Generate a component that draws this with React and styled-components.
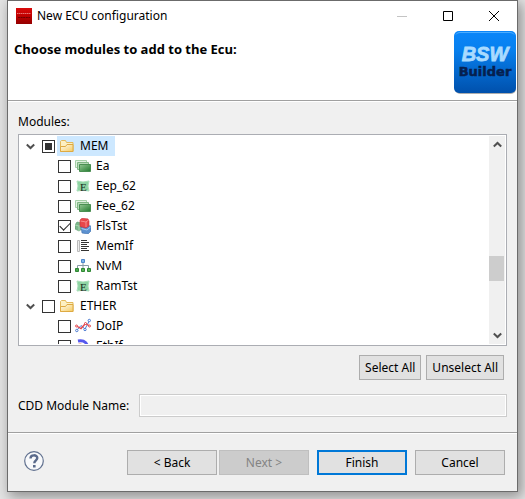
import React, { useEffect, useRef } from "react";
import styled, { createGlobalStyle, css } from "styled-components";

const GlobalStyle = createGlobalStyle`
  * { box-sizing: border-box; }
  body {
    margin: 0;
    background: #e4e4e4;
    color: #000;
    font: 12px/20px "Noto Sans", "Open Sans", sans-serif;
  }
  button, input { font: inherit; color: inherit; }
  svg { display: block; flex: none; }
`;

const Desktop = styled.div`
  height: 100vh;
  padding: 0 7px 7px;
  overflow: hidden;
`;

const Dialog = styled.main`
  display: flex;
  flex-direction: column;
  height: 100%;
  border: 1px solid #6b6b6b;
  background: #f0f0f0;
  box-shadow: 3px 4px 12px 1px rgba(0, 0, 0, 0.36);
`;

const TitleBar = styled.header`
  display: flex;
  align-items: center;
  gap: 5px;
  height: 29px;
  padding-left: 8px;
  background: #fff;
`;

const Title = styled.h1`
  flex: 1;
  margin: 0;
  padding-top: 1px;
  font-size: 12px;
  font-weight: 400;
`;

const CaptionButtons = styled.div`
  display: flex;
`;

const CaptionButton = styled.button`
  display: grid;
  place-items: center;
  width: 46px;
  height: 28px;
  padding: 0;
  border: 0;
  background: transparent;
`;

const Banner = styled.section`
  display: flex;
  justify-content: space-between;
  align-items: flex-start;
  height: 71px;
  padding: 1px 0 0 6px;
  border-bottom: 1px solid #a0a0a0;
  background: #fff;
`;

const BannerTitle = styled.h2`
  margin: 8px 0 0;
  font-family: "Open Sans", "Noto Sans", sans-serif;
  font-size: 13px;
  font-weight: 700;
`;

const Content = styled.section`
  flex: 1;
  display: flex;
  flex-direction: column;
  min-height: 0;
  padding: 10px 10px 15px;
  border-top: 1px solid #fff;
`;

const Label = styled.label`
  white-space: nowrap;
`;

const TreeBox = styled.div`
  flex: 1;
  display: flex;
  min-height: 0;
  margin-top: 2px;
  padding: 1px;
  border: 1px solid #abadb3;
  background: #fff;
`;

const Tree = styled.ul`
  flex: 1;
  margin: 0;
  padding: 0;
  overflow: hidden;
  list-style: none;
`;

const Group = styled.ul`
  margin: 0;
  padding: 0;
  list-style: none;
`;

const Row = styled.div`
  display: flex;
  align-items: center;
  height: 20px;
  padding-left: ${(p) => (p.$child ? 38 : 6)}px;
`;

const Expander = styled.button`
  display: flex;
  align-items: center;
  width: 16px;
  height: 16px;
  padding: 0;
  border: 0;
  background: transparent;
`;

const Check = styled.input`
  appearance: none;
  display: grid;
  place-items: center;
  flex: none;
  width: 13px;
  height: 13px;
  margin: 0 2px 0 0;
  border: 1px solid #333;
  background: #fff;

  &:indeterminate::before {
    content: "";
    width: 7px;
    height: 7px;
    background: #333;
  }
  &:checked::before {
    content: "";
    width: 9px;
    height: 5px;
    margin-top: -2px;
    border: solid #222;
    border-width: 0 0 1px 1px;
    transform: rotate(-45deg);
  }
`;

const ItemLabel = styled.label`
  display: flex;
  align-items: center;
  gap: 5px;
  height: 20px;
  padding: 0 7px 0 2px;
  line-height: 18px;
  ${(p) => p.$selected && css`background: #cde8ff;`}
`;

const ScrollBar = styled.div`
  display: flex;
  flex-direction: column;
  width: 16px;
  background: #f0f0f0;
`;

const ScrollArrow = styled.button`
  display: grid;
  place-items: center;
  height: 17px;
  padding: 0;
  border: 0;
  background: transparent;
`;

const ScrollTrack = styled.div`
  flex: 1;
  display: flex;
  flex-direction: column;
`;

const ScrollSpace = styled.div`
  flex: ${(p) => p.$share};
`;

const ScrollThumb = styled.div`
  width: 15px;
  height: 25px;
  background: #cdcdcd;
`;

const Actions = styled.div`
  display: flex;
  justify-content: flex-end;
  gap: 5px;
  padding: 9px 3px 14px 0;
`;

const Button = styled.button`
  height: 25px;
  padding: 0 5px;
  border: 1px solid #adadad;
  border-radius: 0;
  background: #e1e1e1;
  line-height: 20px;
  white-space: nowrap;
  ${(p) => p.$wide && css`width: 90px;`}
  ${(p) => p.$primary && css`border: 2px solid #0078d7;`}
  &:disabled {
    border-color: #bfbfbf;
    background: #ccc;
    color: #838383;
  }
`;

const Field = styled.div`
  display: flex;
  align-items: center;
  gap: 10px;
`;

const TextBox = styled.input`
  flex: 1;
  min-width: 0;
  height: 23px;
  border: 1px solid #ccc;
  outline: 1px solid #fff;
  outline-offset: -2px;
  background: #f0f0f0;
`;

const Footer = styled.footer`
  display: flex;
  align-items: center;
  padding: 17px 12px 16px 16px;
  border-top: 1px solid #a0a0a0;
  box-shadow: inset 0 1px #fff;
`;

const HelpButton = styled.button`
  margin-right: auto;
  padding: 0 0 3px;
  border: 0;
  background: transparent;
`;

const Pair = styled.div`
  display: flex;
  gap: 2px;
`;

const ButtonRow = styled.div`
  display: flex;
  gap: 8px;
`;

const AppIcon = () => (
  <svg width="16" height="16" viewBox="0 0 16 16" aria-hidden="true">
    <defs>
      <linearGradient id="red" x2="0" y2="1">
        <stop stopColor="#d90b0b" />
        <stop offset=".45" stopColor="#c20000" />
        <stop offset="1" stopColor="#940000" />
      </linearGradient>
    </defs>
    <path fill="url(#red)" d="M0 0h16v16H0z" />
    <path stroke="#f29a9a" strokeDasharray="1.5 .5" d="M1 5.500h14" opacity=".75" />
    <path stroke="#6d0000" strokeDasharray="2 .6" d="M2 9.500h12" />
  </svg>
);

const Logo = () => (
  <svg width="63" height="64" viewBox="0 0 63 64" role="img" aria-label="BSW Builder">
    <defs>
      <linearGradient id="blue" x2="0" y2="1">
        <stop stopColor="#0a86fa" />
        <stop offset=".3" stopColor="#0780ee" />
        <stop offset="1" stopColor="#0050ac" />
      </linearGradient>
    </defs>
    <rect x="1" y="2" width="61" height="61" rx="5" fill="#777" opacity=".6" />
    <rect x="0" y="0" width="62" height="62" rx="5" fill="url(#blue)" />
    <path d="M2 3.500Q3 1.500 6 1.500H56Q59 1.500 60 3.500" fill="none" stroke="#4cadff" />
    <text x="31" y="30" textAnchor="middle" fill="#a9dbff" fontFamily="Liberation Sans, Arial, sans-serif" fontSize="20" fontWeight="700" fontStyle="italic" stroke="#a9dbff" strokeWidth=".8">BSW</text>
    <text x="31" y="45" textAnchor="middle" fill="#06204f" fontFamily="DejaVu Sans, Verdana, sans-serif" fontSize="13" fontWeight="700" stroke="#06204f" strokeWidth=".5">Builder</text>
  </svg>
);

const Chevron = ({ up }) => (
  <svg width="9" height="7" viewBox="0 0 9 7" aria-hidden="true">
    <path d={up ? "M.8 5.500 4.500 2 8.200 5.500" : "M.8 1.500 4.500 5 8.200 1.500"} fill="none" stroke="#505050" strokeWidth="2" />
  </svg>
);

const FolderIcon = () => (
  <svg width="16" height="16" viewBox="0 0 16 16" aria-hidden="true">
    <defs>
      <linearGradient id="folder" x2="1" y2="1">
        <stop stopColor="#fffdf0" />
        <stop offset="1" stopColor="#f5cb62" />
      </linearGradient>
    </defs>
    <path d="M1.500 13.500V3.500l1-1h4l1 2h6.500v9z" fill="#fdf0c2" stroke="#e3b95a" />
    <path d="M1.500 13.500V8.500h5l1.500-2h6v7z" fill="url(#folder)" stroke="#deaa42" />
  </svg>
);

const StackIcon = () => (
  <svg width="16" height="16" viewBox="0 0 16 16" aria-hidden="true">
    <defs>
      <linearGradient id="leaf" x2="1" y2="1">
        <stop stopColor="#93c893" />
        <stop offset="1" stopColor="#237a2f" />
      </linearGradient>
    </defs>
    <path d="M.5 2.500h11v7H.5z" fill="#e3f2e3" stroke="#a5cfa7" />
    <path d="M2.500 4.500h11v7h-11z" fill="#b7d9b8" stroke="#80b684" />
    <path d="M4.500 6.500h11v7h-11z" fill="url(#leaf)" stroke="#4a8f52" />
  </svg>
);

const EIcon = () => (
  <svg width="16" height="16" viewBox="0 0 16 16" aria-hidden="true">
    <path d="M2 3q6 2 12 0-2 5 0 10-6-1.500-12 0 2-5 0-10z" fill="#8dd3a2" stroke="#a8dfb8" />
    <text x="5" y="13" fontFamily="Liberation Serif, serif" fontSize="11" fill="#172b1d">E</text>
  </svg>
);

const CubesIcon = () => (
  <svg width="16" height="16" viewBox="0 0 16 16" aria-hidden="true">
    <path d="M0 7 2 4l5 1v6l-3 2-4-2z" fill="#7bb68a" stroke="#57976a" strokeWidth=".6" />
    <path d="M0 7l4 1 3-2M4 8v5" fill="none" stroke="#a8d6b2" />
    <path d="M6 9l3-2 7 1v5l-3 3-6-1z" fill="#5c91d0" stroke="#3f70ac" strokeWidth=".6" />
    <path d="M6.500 10.500 12 12l3.500-3" fill="none" stroke="#a8caee" />
    <path d="M5 2l2-1.700 6 .6L14 3v5l-3 2-6-1.500z" fill="#e8474a" stroke="#c52f37" strokeWidth=".6" />
    <path d="M5.500 3 11 4l2.500-2M11 4v5" fill="none" stroke="#f58e8e" />
  </svg>
);

const LinesIcon = () => (
  <svg width="16" height="16" viewBox="0 0 16 16" aria-hidden="true">
    <path d="M2.500 2.500h2v11h-2z" fill="#eee" stroke="#bbb" />
    <path d="M6 2.500h6M6 4.500h8M6 6.500h6M6 8.500h8M6 10.500h6M6 12.500h8" stroke="#333" />
  </svg>
);

const NetworkIcon = () => (
  <svg width="16" height="16" viewBox="0 0 16 16" aria-hidden="true">
    <path d="M8 5v3M2.500 10V7.500h11V10M8 7.500V10" fill="none" stroke="#8a9ba7" />
    <path d="M6.500 1.500h3v3h-3z" fill="#7db5ef" stroke="#4d87cb" />
    <path d="M.5 10.500h3v3h-3z" fill="#4aa84c" stroke="#2f8735" />
    <path d="M6.500 10.500h3v3h-3zM12.500 10.500h3v3h-3z" fill="#57b455" stroke="#2f8735" />
  </svg>
);

const ChartIcon = () => (
  <svg width="16" height="16" viewBox="0 0 16 16" aria-hidden="true">
    <path d="M1.500 12.500 6 7.500l4 3.500L14.500 2.500" fill="none" stroke="#4b7bd1" />
    <path d="M1.500 8 6 10.500l4.500-5 4 2.500" fill="none" stroke="#e5484d" strokeWidth="1.400" />
    <g fill="#fff">
      <g stroke="#4b7bd1">
        <circle cx="1.800" cy="12.500" r="1.200" /><circle cx="10" cy="11.500" r="1.200" /><circle cx="14.300" cy="2.500" r="1.200" />
      </g>
      <g stroke="#e5484d">
        <circle cx="1.500" cy="8" r="1" /><circle cx="10.500" cy="5.500" r="1" /><circle cx="14.500" cy="8" r="1" />
      </g>
    </g>
  </svg>
);

const ArcIcon = () => (
  <svg width="16" height="16" viewBox="0 0 16 16" aria-hidden="true">
    <path d="M3 3q10-2 10 10" fill="none" stroke="#5558ed" strokeWidth="3" />
    <path d="M3 8q5-2 6 5" fill="none" stroke="#f4764f" strokeWidth="4" />
  </svg>
);

const HelpIcon = () => (
  <svg width="20" height="20" viewBox="0 0 20 20" aria-hidden="true">
    <circle cx="10" cy="10" r="9.300" fill="#f8f9fb" stroke="#61718f" strokeWidth="1.200" />
    <path d="M6.500 7.400C6.500 3.300 13.300 3.400 13.300 7.100 13.300 9.300 10.300 9.600 10.300 12.300" fill="none" stroke="#5a6a8b" strokeWidth="2.400" />
    <path d="M9 14h2.600v2.500H9z" fill="#5a6a8b" />
  </svg>
);

const modules = [
  {
    name: "MEM", partial: true, selected: true,
    items: [
      ["Ea", StackIcon], ["Eep_62", EIcon], ["Fee_62", StackIcon], ["FlsTst", CubesIcon, true],
      ["MemIf", LinesIcon], ["NvM", NetworkIcon], ["RamTst", EIcon],
    ],
  },
  { name: "ETHER", items: [["DoIP", ChartIcon], ["EthIf", ArcIcon]] },
];

function TreeRow({ name, icon: Icon, child, checked, partial, selected }) {
  const box = useRef(null);
  useEffect(() => {
    box.current.indeterminate = Boolean(partial);
  }, [partial]);
  return (
    <Row $child={child}>
      {!child && <Expander type="button" aria-label={`Collapse ${name}`}><Chevron /></Expander>}
      <Check ref={box} type="checkbox" id={`module-${name}`} defaultChecked={checked} />
      <ItemLabel htmlFor={`module-${name}`} $selected={selected}><Icon />{name}</ItemLabel>
    </Row>
  );
}

export default function App() {
  return (
    <Desktop>
      <GlobalStyle />
      <Dialog>
        <TitleBar>
          <AppIcon />
          <Title>New ECU configuration</Title>
          <CaptionButtons>
            <CaptionButton type="button" aria-label="Minimize" disabled>
              <svg width="10" height="10"><path d="M0 5.500h10" stroke="#c4c4c4" /></svg>
            </CaptionButton>
            <CaptionButton type="button" aria-label="Maximize">
              <svg width="10" height="10"><path d="M.5.5h9v9h-9z" fill="none" stroke="#000" /></svg>
            </CaptionButton>
            <CaptionButton type="button" aria-label="Close">
              <svg width="10" height="10"><path d="M0 0l10 10M10 0 0 10" stroke="#000" /></svg>
            </CaptionButton>
          </CaptionButtons>
        </TitleBar>
        <Banner>
          <BannerTitle>Choose modules to add to the Ecu:</BannerTitle>
          <Logo />
        </Banner>
        <Content>
          <Label as="span" id="modules-label">Modules:</Label>
          <TreeBox>
            <Tree aria-labelledby="modules-label">
              {modules.map((group) => (
                <li key={group.name}>
                  <TreeRow name={group.name} icon={FolderIcon} partial={group.partial} selected={group.selected} />
                  <Group>
                    {group.items.map(([name, icon, checked]) => (
                      <li key={name}><TreeRow child name={name} icon={icon} checked={checked} /></li>
                    ))}
                  </Group>
                </li>
              ))}
            </Tree>
            <ScrollBar>
              <ScrollArrow type="button" aria-label="Scroll up"><Chevron up /></ScrollArrow>
              <ScrollTrack>
                <ScrollSpace $share={103} />
                <ScrollThumb />
                <ScrollSpace $share={46} />
              </ScrollTrack>
              <ScrollArrow type="button" aria-label="Scroll down"><Chevron /></ScrollArrow>
            </ScrollBar>
          </TreeBox>
          <Actions>
            <Button type="button">Select All</Button>
            <Button type="button">Unselect All</Button>
          </Actions>
          <Field>
            <Label htmlFor="cdd-name">CDD Module Name:</Label>
            <TextBox id="cdd-name" type="text" disabled />
          </Field>
        </Content>
        <Footer>
          <HelpButton type="button" aria-label="Help"><HelpIcon /></HelpButton>
          <ButtonRow>
            <Pair>
              <Button type="button" $wide>&lt; Back</Button>
              <Button type="button" $wide disabled>Next &gt;</Button>
            </Pair>
            <Button type="button" $wide $primary>Finish</Button>
            <Button type="button" $wide>Cancel</Button>
          </ButtonRow>
        </Footer>
      </Dialog>
    </Desktop>
  );
}
